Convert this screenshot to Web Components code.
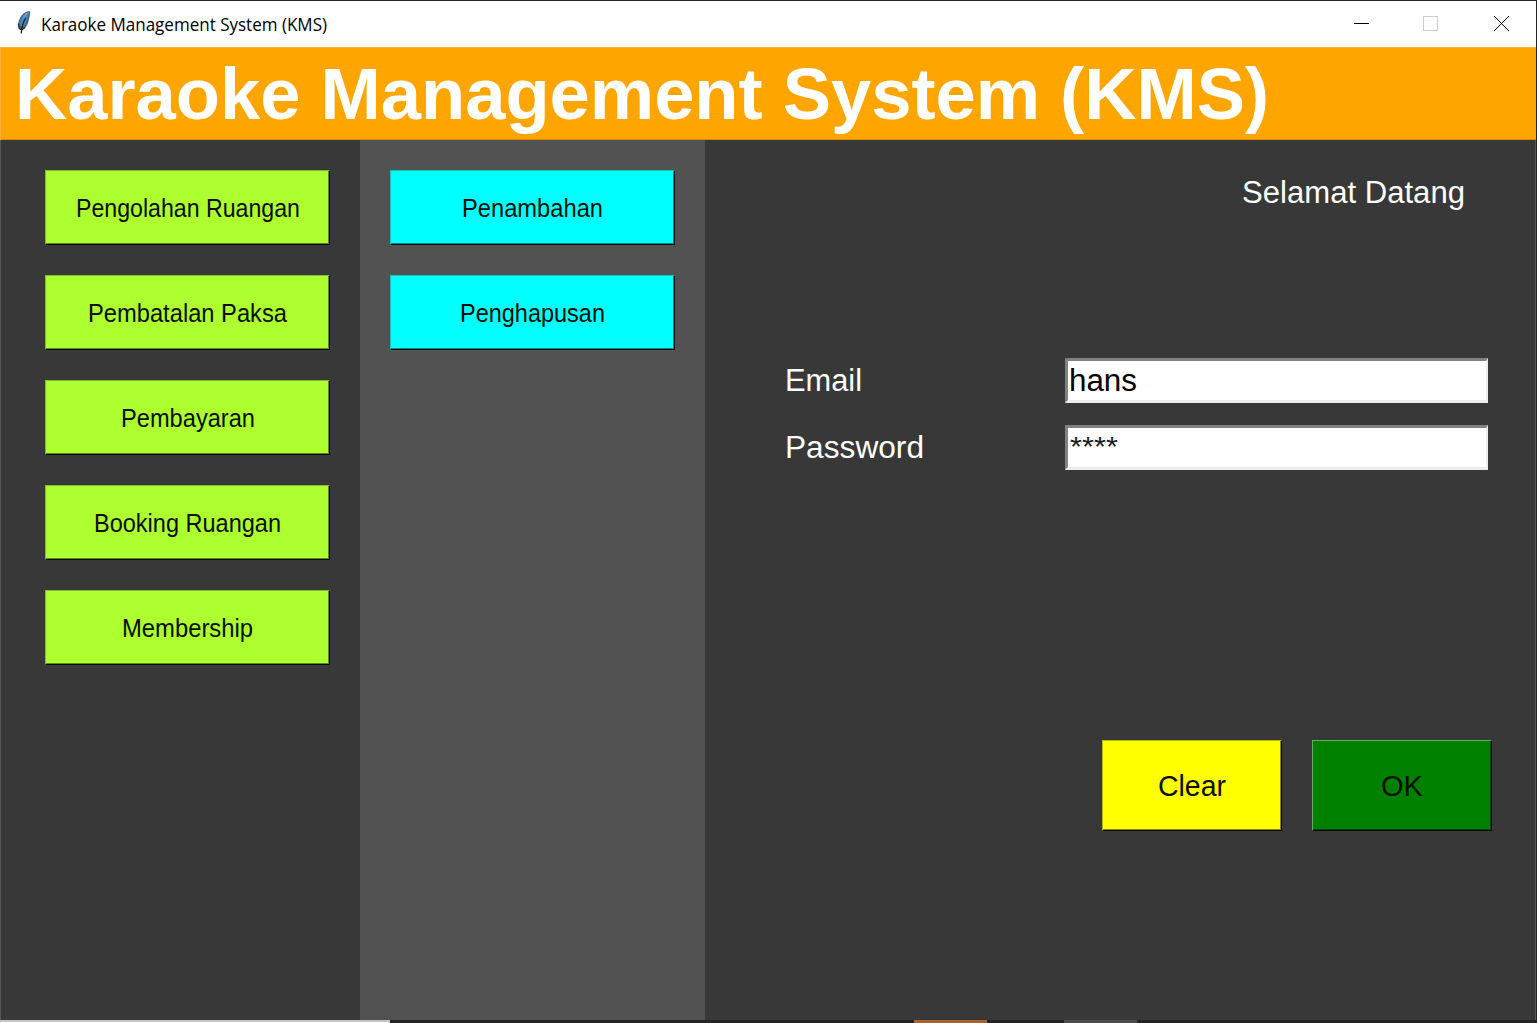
<!DOCTYPE html>
<html lang="id">
<head>
<meta charset="utf-8">
<title>Karaoke Management System (KMS)</title>
<style>
html, body { margin: 0; height: 100%; overflow: hidden; background: #242424; font-family: "Liberation Sans", Arial, sans-serif; }
</style>
</head>
<body>
<kms-app></kms-app>
<script>
const define = (name, html, setup) => {
  const tpl = document.createElement('template');
  tpl.innerHTML = html;
  customElements.define(name, class extends HTMLElement {
    connectedCallback() {
      if (this.shadowRoot) return;
      this.attachShadow({ mode: 'open' }).append(tpl.content.cloneNode(true));
      if (setup) setup(this, this.shadowRoot);
    }
  });
};

/* One line of text whose advance is adjusted to the given width. */
define('fit-text', `
<style>
:host { display: block; flex: none; white-space: nowrap; }
span { display: inline-block; transform-origin: 0 50%; }
</style><span><slot></slot></span>`, (host, root) => {
  const w = Number(host.getAttribute('w'));
  const span = root.querySelector('span');
  const natural = span.getBoundingClientRect().width;
  host.style.width = w + 'px';
  if (natural) span.style.transform = 'scaleX(' + w / natural + ')';
});

define('title-bar', `
<style>
:host { display: flex; align-items: center; box-sizing: border-box; height: 47px; flex: none; background: #fff; border-top: 1px solid #252525; border-right: 1px solid #252525; color: #000; font: 17.6px/24px "Open Sans", "Noto Sans", sans-serif; }
.icon { margin: 0 9px 4px 16px; flex: none; }
.controls { margin-left: auto; display: flex; align-self: stretch; }
</style>
<svg class="icon" width="16" height="26" viewBox="0 0 16 26">
<path d="M13.8 2.1C9.5 2 5.2 5.8 3.4 10.2C2.1 13.2 1.6 17.2 2.8 18.8L4.8 21.2C9 20.5 11.8 16.2 12.6 12C13.3 8.2 14.8 5.2 13.8 2.1Z" fill="#5a6068"/>
<path d="M13 2.9C9 3.4 6.1 7 4.4 11C3.5 13.5 3 15.5 3.4 17.4L6.6 17.6C9.6 15.8 11 11.6 11.9 8.4C12.6 6 13.6 4.4 13 2.9Z" fill="#4385c9"/>
<path d="M12.5 3.2C9.7 4.4 8 6.6 6.8 9.4L9.8 6.6" fill="#8aaed0"/>
<path d="M9.6 9C7.4 12.6 5.8 17 5.2 24.5" fill="none" stroke="#161d25" stroke-width="1.2"/>
<path d="M2.4 14.5L3.4 19.5L5.6 21L9 18.4" fill="none" stroke="#2b2b2b" stroke-width="1.4"/>
</svg>
<fit-text w="286"><slot></slot></fit-text>
<div class="controls">
<svg width="191" height="46" viewBox="0 0 191 46" fill="none" shape-rendering="crispEdges">
<path d="M9 22.5H24" stroke="#000"/>
<rect x="78.5" y="15.5" width="14" height="14" stroke="#ccc"/>
<path d="M149 15L164 30M164 15L149 30" stroke="#000" stroke-width="1" shape-rendering="auto"/>
</svg>
</div>`);

define('app-banner', `
<style>
:host { display: flex; align-items: center; box-sizing: border-box; height: 93px; flex: none; padding: 0 0 0 15px; background: #ffa500; color: #fff; font-weight: 700; font-size: 73px; line-height: 88px; border-right: 1px solid #252525; box-shadow: inset 1px 1px #fbb338, inset 0 -1px #d68b03; }
</style>
<fit-text w="1254"><slot></slot></fit-text>`);

define('tk-button', `
<style>
:host { display: flex; align-items: center; justify-content: center; box-sizing: border-box; flex: none; width: 285px; height: 75px; font-size: 25px; line-height: 30px; color: #0a0f04; background: var(--face); border: 1px solid var(--hi); border-right-color: #070707; border-bottom-color: #070707; box-shadow: inset -1px -1px var(--lo); }
:host([tone=lime]) { --face: #adff2f; --hi: #83b83a; --lo: #5e8920; }
:host([tone=cyan]) { --face: #0ff; --hi: #1abfbf; --lo: #078a8a; }
:host([tone=yellow]) { --face: #ff0; --hi: #b8b812; --lo: #8b8b05; }
:host([tone=green]) { --face: #008000; --hi: #68aa68; --lo: #034703; }
:host([big]) { width: 180px; height: 91px; font-size: 28.8px; line-height: 34px; }
</style>
<slot></slot>`);

define('button-column', `
<style>
:host { display: flex; flex-direction: column; gap: 30px; box-sizing: border-box; flex: none; padding-top: 30px; }
</style>
<slot></slot>`);

define('form-field', `
<style>
:host { display: flex; align-items: center; height: 45px; font-size: 31px; line-height: 36px; color: #fff; }
.label { width: 280px; padding-left: 1px; flex: none; }
.label fit-text { margin-top: -1px; }
.box { box-sizing: border-box; width: 423px; height: 45px; display: flex; align-items: center; padding: 1px 0 0 1px; background: #fff; color: #000; border: 3px solid; border-color: #828282 #ededed #ededed #828282; border-right-width: 2px; }
</style>
<div class="label"><slot name="label"></slot></div>
<div class="box"><slot></slot></div>`);

define('login-pane', `
<style>
:host { display: flex; flex-direction: column; box-sizing: border-box; flex: 1; padding: 0 44px 0 79px; color: #fff; font-size: 31px; line-height: 36px; }
.welcome { align-self: flex-end; margin: 35px 27px 0 0; }
.fields { display: flex; flex-direction: column; gap: 22px; margin-top: 147px; }
.stars { font-size: 28px; margin: -3px 0 0 1px; color: #1a1a1a; }
.actions { display: flex; justify-content: flex-end; gap: 30px; margin-top: 270px; }
</style>
<fit-text class="welcome" w="223">Selamat Datang</fit-text>
<div class="fields">
<form-field><fit-text slot="label" w="77">Email</fit-text><fit-text w="68">hans</fit-text></form-field>
<form-field><fit-text slot="label" w="139">Password</fit-text><fit-text class="stars" w="48">****</fit-text></form-field>
</div>
<div class="actions">
<tk-button big tone="yellow"><fit-text w="68">Clear</fit-text></tk-button>
<tk-button big tone="green"><fit-text w="42">OK</fit-text></tk-button>
</div>`);

define('task-strip', `
<style>
:host { display: flex; height: 3px; flex: none; background: #242424; }
.light { width: 390px; box-sizing: border-box; border-top: 2px solid #c4c4c4; border-right: 1px solid #c4c4c4; background: #fff; }
.orange { width: 73px; margin-left: 524px; background: #a9622f; }
.grey { width: 73px; margin-left: 77px; background: #4d4d4d; }
</style>
<div class="light"></div><div class="orange"></div><div class="grey"></div>`);

define('kms-app', `
<style>
:host { display: flex; flex-direction: column; width: 1537px; height: 1023px; }
.body { flex: 1; min-height: 0; display: flex; box-sizing: border-box; background: #383838; border-left: 1px solid #575757; border-right: 1px solid #252525; box-shadow: inset -1px 0 #575757; }
.menu { width: 359px; padding-left: 44px; }
.sub { width: 345px; padding-left: 30px; background: #525252; }
</style>
<title-bar>Karaoke Management System (KMS)</title-bar>
<app-banner>Karaoke Management System (KMS)</app-banner>
<div class="body">
<button-column class="menu">
<tk-button tone="lime"><fit-text w="224">Pengolahan Ruangan</fit-text></tk-button>
<tk-button tone="lime"><fit-text w="199">Pembatalan Paksa</fit-text></tk-button>
<tk-button tone="lime"><fit-text w="134">Pembayaran</fit-text></tk-button>
<tk-button tone="lime"><fit-text w="187">Booking Ruangan</fit-text></tk-button>
<tk-button tone="lime"><fit-text w="131">Membership</fit-text></tk-button>
</button-column>
<button-column class="sub">
<tk-button tone="cyan"><fit-text w="141">Penambahan</fit-text></tk-button>
<tk-button tone="cyan"><fit-text w="145">Penghapusan</fit-text></tk-button>
</button-column>
<login-pane></login-pane>
</div>
<task-strip></task-strip>`);
</script>
</body>
</html>
